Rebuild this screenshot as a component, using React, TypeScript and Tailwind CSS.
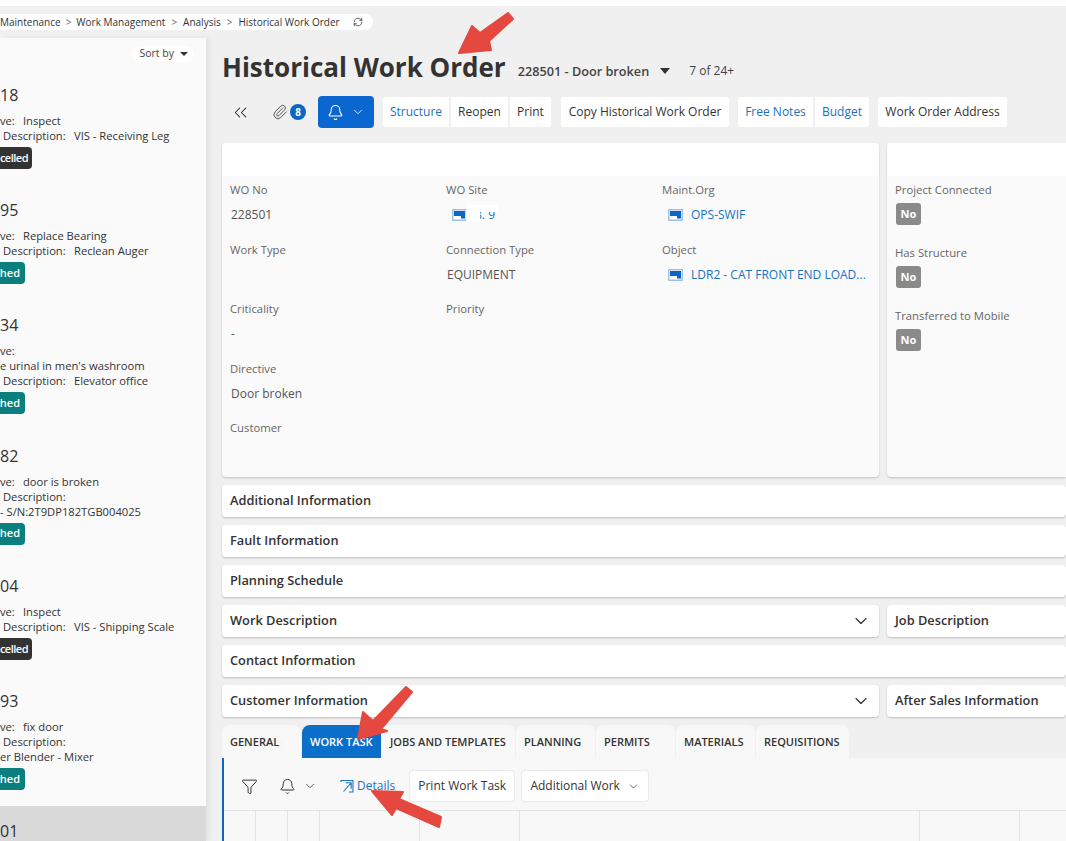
import React from 'react';
import { Bell, ChevronDown, ChevronsLeft, Funnel, Paperclip, RefreshCw } from 'lucide-react';

const listItems = [
    { no: '18', lines: [['ve:', 'Inspect', 0], ['Description:', 'VIS - Receiving Leg', 3]], status: 'celled' },
    { no: '95', lines: [['ve:', 'Replace Bearing', 0], ['Description:', 'Reclean Auger', 3]], status: 'hed' },
    { no: '34', lines: [['ve:', '', 0], ["e urinal in men's washroom", '', 0], ['Description:', 'Elevator office', 3]], status: 'hed' },
    { no: '82', lines: [['ve:', 'door is broken', 0], ['Description:', '', 3], ['- S/N:2T9DP182TGB004025', '', 0]], status: 'hed' },
    { no: '04', lines: [['ve:', 'Inspect', 0], ['Description:', 'VIS - Shipping Scale', 3]], status: 'celled' },
    { no: '93', lines: [['ve:', 'fix door', 0], ['Description:', '', 3], ['er Blender - Mixer', '', 0]], status: 'hed' },
] as const;

const Field = ({ label, children }: { label: string; children?: React.ReactNode }) => (
    <div className="h-[59.5px]">
        <div className="text-[11.3px] leading-[16px] text-[#666]">{label}</div>
        <div className="mt-[9px] flex h-[16px] items-center pl-px text-[12px] text-[#555]">{children}</div>
    </div>
);

const LinkIcon = () => (
    <svg width="15" height="12" viewBox="0 0 15 12" className="mr-[8px] ml-[5px] shrink-0">
        <rect width="15" height="12" rx="1" fill="#9cc0e6" />
        <rect x="1.5" y="1.5" width="12" height="9" fill="#fff" />
        <rect x="2" y="2" width="11" height="5" fill="#0b67c2" />
        <rect x="9" y="7" width="4" height="2.5" fill="#0b67c2" />
    </svg>
);

const NoBadge = () => (
    <div className="mt-[5px] ml-px flex h-[22px] w-[25px] items-center justify-center rounded-[3px] bg-[#8a8a8a] text-[11px] font-bold text-white">No</div>
);

const Section = ({ title, chevron, className = '' }: { title: string; chevron?: boolean; className?: string }) => (
    <div className={`flex h-[32px] items-center justify-between rounded-[4px] bg-white px-2 shadow-[0_1px_2px_rgba(0,0,0,0.22)] ${className}`}>
        <span className="text-[12.8px] font-semibold text-[#333]">{title}</span>
        {chevron && <ChevronDown size={20} strokeWidth={1.4} className="text-[#333]" />}
    </div>
);

const Btn = ({ children, blue, className = '' }: { children: React.ReactNode; blue?: boolean; className?: string }) => (
    <div className={`flex h-[30px] items-center justify-center bg-white text-[12px] ${blue ? 'text-[#1a73c0]' : 'text-[#333]'} ${className}`}>{children}</div>
);

const tabs = [
    ['GENERAL', 'w-[79px]'],
    ['WORK TASK', 'w-[79px]'],
    ['JOBS AND TEMPLATES', 'w-[133px]'],
    ['PLANNING', 'w-[79px]'],
    ['PERMITS', 'w-[79px]'],
    ['MATERIALS', 'w-[79px]'],
    ['REQUISITIONS', 'w-[93px]'],
];

const columns = ['w-[32px]', 'w-[32px]', 'w-[32px]', 'w-[100px]', 'w-[100px]', 'w-[400px]', 'w-[100px]', 'w-[100px]'];

const Arrow = ({ points }: { points: string }) => (
    <polygon points={points} fill="#e5483f" stroke="#e5483f" strokeWidth="2" strokeLinejoin="round" />
);

export default function App() {
    return (
        <div className="relative h-[841px] w-[1066px] overflow-hidden bg-[#f0f0f0] font-['Open_Sans',sans-serif]">
            <div className="h-[6px] bg-white" />

            {/* breadcrumb */}
            <div className="mt-[8px] flex h-[16px] w-[373px] items-center rounded-r-full bg-white text-[10px] whitespace-nowrap text-[#333]">
                <span>Maintenance</span>
                <span className="mx-[5px] text-[#666]">&gt;</span>
                <span>Work Management</span>
                <span className="mx-[6px] text-[#666]">&gt;</span>
                <span>Analysis</span>
                <span className="mx-[6px] text-[#666]">&gt;</span>
                <span>Historical Work Order</span>
                <RefreshCw size={10} className="ml-[13px] text-[#444]" />
            </div>

            <div className="mt-[8px] flex">
                {/* list */}
                <aside className="w-[206px] shrink-0 overflow-hidden bg-[#fafafa] shadow-[3px_0_4px_rgba(0,0,0,0.06)]">
                    <div className="flex h-[32px] justify-end pt-[8px] pr-[12px]">
                        <div className="flex h-[16px] w-[62px] items-center justify-end gap-[6px] rounded-full bg-white pr-[6px] text-[10.5px] text-[#444]">
                            Sort by
                            <span className="h-0 w-0 border-x-[4px] border-t-[4px] border-x-transparent border-t-[#333]" />
                        </div>
                    </div>
                    {listItems.map((item) => (
                        <div key={item.no + item.status} className="pt-[13px] pb-[16.2px]">
                            <div className="mb-[7px] h-[24px] text-[16px] leading-[24px] text-[#333]">{item.no}</div>
                            {item.lines.map(([label, value, indent], i) => (
                                <div key={i} className={`flex h-[15px] items-center whitespace-nowrap text-[11.2px] text-[#333] ${indent ? 'pl-[3px]' : ''}`}>
                                    <span>{label}</span>
                                    {value && <span className={`absolute ${indent ? 'left-[74px]' : 'left-[23px]'}`}>{value}</span>}
                                </div>
                            ))}
                            <div className={`mt-[3px] flex h-[22px] items-center justify-end rounded-r-[4px] text-[11px] font-semibold text-white ${item.status === 'celled' ? 'w-[32px] bg-[#333] pr-[4px] tracking-[-0.5px]' : 'w-[25px] bg-[#0a7f7d] pr-[5px]'}`}>
                                <span>{item.status}</span>
                            </div>
                        </div>
                    ))}
                    <div className="h-[35px] bg-[#d9d9d9] pt-[13px] text-[16px] leading-[24px] text-[#333]">01</div>
                </aside>

                {/* main */}
                <main className="min-w-0 flex-1 pl-[16px]">
                    <div className="flex h-[46px] items-center pt-[12px]">
                        <h1 className="text-[26px] font-bold whitespace-nowrap text-[#333]">Historical Work Order</h1>
                        <span className="mt-[10px] ml-[12px] text-[12.7px] font-semibold text-[#444]">228501 - Door broken</span>
                        <span className="mt-[8px] ml-[11px] h-0 w-0 border-x-[5px] border-t-[6px] border-x-transparent border-t-[#333]" />
                        <span className="mt-[8px] ml-[19px] text-[12px] text-[#444]">7 of 24+</span>
                    </div>

                    {/* toolbar */}
                    <div className="mt-[12px] flex h-[32px] items-center">
                        <ChevronsLeft size={21} strokeWidth={1.2} className="ml-[8px] text-[#333]" />
                        <Paperclip size={16} strokeWidth={1.5} className="ml-[21px] text-[#555]" />
                        <span className="ml-[2px] flex h-[16px] w-[16px] items-center justify-center rounded-full bg-[#0b67c2] text-[10px] font-bold text-white">8</span>
                        <div className="ml-[12px] flex h-[32px] w-[56px] items-center justify-center gap-[7px] rounded-[4px] bg-[#0b67d0] text-white">
                            <Bell size={17} strokeWidth={1.5} />
                            <ChevronDown size={14} strokeWidth={1.4} />
                        </div>
                        <Btn blue className="ml-[9px] w-[66px] rounded-l-[3px]">Structure</Btn>
                        <Btn className="ml-[2px] w-[57px]">Reopen</Btn>
                        <Btn className="ml-[2px] w-[41px] rounded-r-[3px]">Print</Btn>
                        <Btn className="ml-[10px] w-[168px] rounded-[3px]">Copy Historical Work Order</Btn>
                        <Btn blue className="ml-[9px] w-[75px] rounded-l-[3px]">Free Notes</Btn>
                        <Btn blue className="ml-[2px] w-[54px] rounded-r-[3px]">Budget</Btn>
                        <Btn className="ml-[9px] w-[129px] rounded-[3px]">Work Order Address</Btn>
                    </div>

                    {/* cards */}
                    <div className="mt-[15px] flex h-[334px] gap-[8px]">
                        <div className="w-[657px] shrink-0 overflow-hidden rounded-[4px] bg-[#fafafa] shadow-[0_1px_2px_rgba(0,0,0,0.2)]">
                            <div className="h-[33px] bg-white" />
                            <div className="grid grid-cols-[216px_216px_1fr] px-[8px] pt-[6px]">
                                <div>
                                    <Field label="WO No">228501</Field>
                                    <Field label="Work Type" />
                                    <Field label="Criticality">-</Field>
                                    <Field label="Directive">Door broken</Field>
                                    <Field label="Customer" />
                                </div>
                                <div>
                                    <Field label="WO Site">
                                        <LinkIcon />
                                        <span className="relative text-[#1a73c0]">
                                            8. 9
                                            <span className="absolute top-[-1px] left-[-9px] h-[7px] w-[32px] bg-white" />
                                            <span className="absolute top-[4px] left-[-9px] h-[12px] w-[14px] rounded-[3px] bg-white" />
                                        </span>
                                    </Field>
                                    <Field label="Connection Type">EQUIPMENT</Field>
                                    <Field label="Priority" />
                                </div>
                                <div>
                                    <Field label="Maint.Org">
                                        <LinkIcon />
                                        <span className="text-[#1a73c0]">OPS-SWIF</span>
                                    </Field>
                                    <Field label="Object">
                                        <LinkIcon />
                                        <span className="whitespace-nowrap text-[#1a73c0]">LDR2 - CAT FRONT END LOAD...</span>
                                    </Field>
                                </div>
                            </div>
                        </div>
                        <div className="min-w-0 flex-1 overflow-hidden rounded-l-[4px] bg-[#fafafa] shadow-[0_1px_2px_rgba(0,0,0,0.2)]">
                            <div className="h-[33px] bg-white" />
                            <div className="px-[8px] pt-[6px]">
                                <div className="h-[63px]">
                                    <div className="text-[11.3px] leading-[16px] text-[#666]">Project Connected</div>
                                    <NoBadge />
                                </div>
                                <div className="h-[63px]">
                                    <div className="text-[11.3px] leading-[16px] text-[#666]">Has Structure</div>
                                    <NoBadge />
                                </div>
                                <div className="h-[63px]">
                                    <div className="text-[11.3px] leading-[16px] text-[#666]">Transferred to Mobile</div>
                                    <NoBadge />
                                </div>
                            </div>
                        </div>
                    </div>

                    {/* collapsible sections */}
                    <div className="mt-[8px] flex flex-col gap-[8px]">
                        <Section title="Additional Information" />
                        <Section title="Fault Information" />
                        <Section title="Planning Schedule" />
                        <div className="flex gap-[8px]">
                            <Section title="Work Description" chevron className="w-[657px] shrink-0" />
                            <Section title="Job Description" className="flex-1" />
                        </div>
                        <Section title="Contact Information" />
                        <div className="flex gap-[8px]">
                            <Section title="Customer Information" chevron className="w-[657px] shrink-0" />
                            <Section title="After Sales Information" className="flex-1" />
                        </div>
                    </div>

                    {/* tabs */}
                    <div className="mt-[8px] flex h-[33px] gap-px">
                        {tabs.map(([name, width]) => (
                            <div
                                key={name}
                                className={`flex items-center rounded-t-[8px] pt-[2px] pl-2 text-[11px] font-semibold whitespace-nowrap ${width} ${name === 'WORK TASK' ? 'bg-[#0b6fc9] text-white' : 'bg-[#f8f8f8] text-[#333]'}`}
                            >
                                {name}
                            </div>
                        ))}
                    </div>

                    <div className="h-[83px] border-l-2 border-[#0b67c2] bg-[#f8f8f8]">
                        <div className="flex h-[53px] items-center border-b border-[#e3e3e3] pt-[4px]">
                            <Funnel size={17} strokeWidth={1.3} className="ml-[17px] text-[#222]" />
                            <Bell size={17} strokeWidth={1.3} className="ml-[21px] text-[#222]" />
                            <ChevronDown size={14} strokeWidth={1.3} className="ml-[7px] text-[#333]" />
                            <svg width="14" height="14" viewBox="0 0 14 14" fill="none" stroke="#1a73c0" strokeWidth="1.1" className="ml-[23px]">
                                <path d="M1 3V1.5h12V13H9M3.5 12.5 11 4M5.5 3.8h5.7v6" />
                            </svg>
                            <span className="ml-[3px] text-[12px] text-[#1a73c0]">Details</span>
                            <Btn className="ml-[15px] w-[104px] rounded-[3px] shadow-[0_0_0_1px_#ebebeb]">Print Work Task</Btn>
                            <Btn className="ml-[8px] w-[126px] gap-[7px] rounded-[3px] shadow-[0_0_0_1px_#ebebeb]">
                                Additional Work
                                <ChevronDown size={13} strokeWidth={1.3} />
                            </Btn>
                        </div>
                        <div className="flex h-[30px]">
                            {columns.map((w, i) => (
                                <div key={i} className={`shrink-0 border-r border-[#e3e3e3] ${w}`} />
                            ))}
                        </div>
                    </div>
                </main>
            </div>

            {/* annotation arrows */}
            <svg width="1066" height="841" className="pointer-events-none absolute inset-0">
                <Arrow points="459,53 472,26 480,33 508,13 513,19 489,41 491,50" />
                <Arrow points="358,739 363,712 373,721 406,687 412,692 381,729 387,731" />
                <Arrow points="372,791 403,792 399,799 441,817 439,827 396,808 392,815" />
            </svg>
        </div>
    );
}
